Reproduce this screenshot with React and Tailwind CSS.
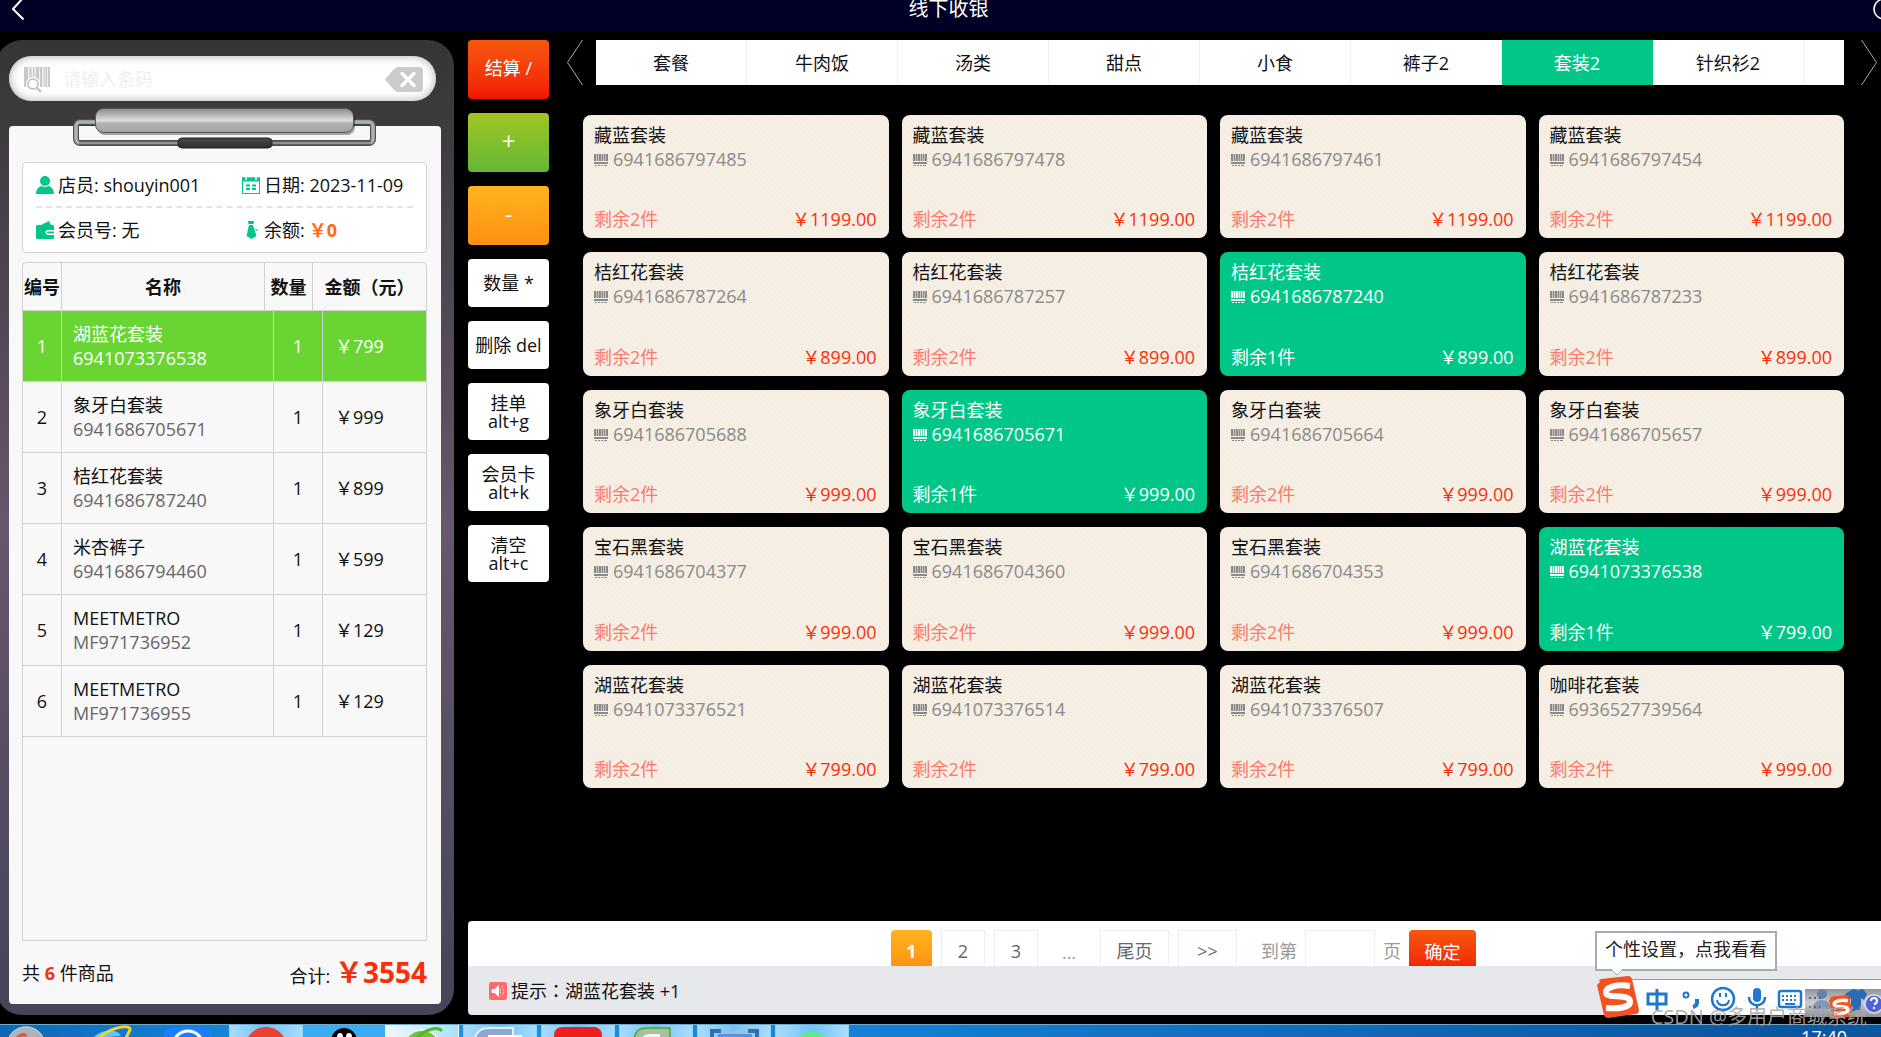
import { useState } from "react";

const categories = ["套餐", "牛肉饭", "汤类", "甜点", "小食", "裤子2", "套装2", "针织衫2"];

const cartItems = [
  { id: 1, name: "湖蓝花套装", code: "6941073376538", qty: 1, price: 799 },
  { id: 2, name: "象牙白套装", code: "6941686705671", qty: 1, price: 999 },
  { id: 3, name: "桔红花套装", code: "6941686787240", qty: 1, price: 899 },
  { id: 4, name: "米杏裤子", code: "6941686794460", qty: 1, price: 599 },
  { id: 5, name: "MEETMETRO", code: "MF971736952", qty: 1, price: 129 },
  { id: 6, name: "MEETMETRO", code: "MF971736955", qty: 1, price: 129 },
];

const products = [
  { name: "藏蓝套装", code: "6941686797485", stock: 2, price: "1199.00" },
  { name: "藏蓝套装", code: "6941686797478", stock: 2, price: "1199.00" },
  { name: "藏蓝套装", code: "6941686797461", stock: 2, price: "1199.00" },
  { name: "藏蓝套装", code: "6941686797454", stock: 2, price: "1199.00" },
  { name: "桔红花套装", code: "6941686787264", stock: 2, price: "899.00" },
  { name: "桔红花套装", code: "6941686787257", stock: 2, price: "899.00" },
  { name: "桔红花套装", code: "6941686787240", stock: 1, price: "899.00" },
  { name: "桔红花套装", code: "6941686787233", stock: 2, price: "899.00" },
  { name: "象牙白套装", code: "6941686705688", stock: 2, price: "999.00" },
  { name: "象牙白套装", code: "6941686705671", stock: 1, price: "999.00" },
  { name: "象牙白套装", code: "6941686705664", stock: 2, price: "999.00" },
  { name: "象牙白套装", code: "6941686705657", stock: 2, price: "999.00" },
  { name: "宝石黑套装", code: "6941686704377", stock: 2, price: "999.00" },
  { name: "宝石黑套装", code: "6941686704360", stock: 2, price: "999.00" },
  { name: "宝石黑套装", code: "6941686704353", stock: 2, price: "999.00" },
  { name: "湖蓝花套装", code: "6941073376538", stock: 1, price: "799.00" },
  { name: "湖蓝花套装", code: "6941073376521", stock: 2, price: "799.00" },
  { name: "湖蓝花套装", code: "6941073376514", stock: 2, price: "799.00" },
  { name: "湖蓝花套装", code: "6941073376507", stock: 2, price: "799.00" },
  { name: "咖啡花套装", code: "6936527739564", stock: 2, price: "999.00" },
];

const actions = [
  { lines: ["结算 /"], style: "h-[59px] pb-1 text-white bg-linear-to-b from-[#f8560e] to-[#f01306]" },
  { lines: ["+"], style: "h-[59px] pb-1 text-2xl text-white bg-linear-to-b from-[#a0c621] to-[#62b735]" },
  { lines: ["-"], style: "h-[59px] pb-1 text-2xl text-white bg-linear-to-b from-[#ffb41e] to-[#ff8f12]" },
  { lines: ["数量 *"], style: "h-12 bg-white" },
  { lines: ["删除 del"], style: "h-12 bg-white" },
  { lines: ["挂单", "alt+g"], style: "h-[57px] bg-white" },
  { lines: ["会员卡", "alt+k"], style: "h-[57px] bg-white" },
  { lines: ["清空", "alt+c"], style: "h-[57px] bg-white" },
];

function Header() {
  return (
    <header className="flex h-[31px] shrink-0 items-start bg-[#000026] pl-3 text-white">
      <button aria-label="返回" className="h-5 w-3">
        <svg width="12" height="20" viewBox="0 0 12 20" fill="none" stroke="currentColor" strokeWidth="2">
          <path d="M11 -2L1 9L11.500 19.500" />
        </svg>
      </button>
      <h1 className="flex-1 text-center text-xl leading-[18px]">线下收银</h1>
      <button aria-label="刷新" className="h-5 w-2 overflow-hidden">
        <svg width="8" height="20" viewBox="0 0 8 20" fill="none" stroke="currentColor" strokeWidth="1.500">
          <circle cx="11" cy="9" r="10" />
        </svg>
      </button>
    </header>
  );
}

function BarcodeScanIcon() {
  return (
    <svg width="28" height="28" viewBox="0 0 28 28" fill="#c9c9c9">
      <path d="M0 0h4v20h-4zM5.500 0h2v20h-2zM9 0h1.500v20h-1.500zM12 0h3v20h-3zM16 0h2v20h-2zM19.500 0h1v20h-1zM21.500 0h1.500v20h-1.500zM24 0h2v20h-2z" />
      <path d="M0 0h26v20h-26z" opacity="0.300" />
      <circle cx="9" cy="17" r="5" fill="#fff" stroke="#fff" strokeWidth="4" />
      <circle cx="9" cy="17" r="5" fill="#fff" stroke="#c9c9c9" strokeWidth="2" />
      <path d="M12.500 20.500l4.500 4.500" stroke="#c9c9c9" strokeWidth="2.500" />
    </svg>
  );
}

function BarcodeIcon() {
  return (
    <svg width="14" height="12" viewBox="0 0 14 12" fill="currentColor" className="mt-0.5">
      <path d="M0 0h14v7h-14z" opacity="0.450" />
      <path d="M0 0h2v7h-2zM3 0h1v7h-1zM5 0h2v7h-2zM8 0h1v7h-1zM10 0h1v7h-1zM12 0h2v7h-2zM0 8h14v2h-14zM1 11h2v1h-2zM4 11h2v1h-2zM7 11h2v1h-2zM10 11h3v1h-3z" />
    </svg>
  );
}

function ClipIcon() {
  return (
    <svg width="304" height="42" viewBox="0 0 304 42" className="absolute -top-[18px] left-16">
      <defs>
        <linearGradient id="clipBar" x1="0" y1="0" x2="0" y2="1">
          <stop offset="0" stopColor="#8c8c8c" />
          <stop offset="0.200" stopColor="#a9a9a9" />
          <stop offset="0.500" stopColor="#dedede" />
          <stop offset="0.620" stopColor="#b4b4b4" />
          <stop offset="1" stopColor="#a0a0a0" />
        </linearGradient>
        <linearGradient id="clipGrip" x1="0" y1="0" x2="0" y2="1">
          <stop offset="0" stopColor="#4a4a4a" />
          <stop offset="1" stopColor="#2c2c2c" />
        </linearGradient>
      </defs>
      <rect x="3" y="14" width="297" height="21" rx="4" fill="none" stroke="#4d4f4f" strokeWidth="6" />
      <rect x="3" y="14" width="297" height="21" rx="4" fill="none" stroke="#9c9e9e" strokeWidth="4" />
      <rect x="3" y="14" width="297" height="21" rx="4" fill="none" stroke="#c4c6c6" strokeWidth="1" />
      <path d="M6 35H298" stroke="#5c5e5e" strokeWidth="4" />
      <path d="M6 35H298" stroke="#a4a6a6" strokeWidth="1.500" />
      <rect x="24" y="2" width="258" height="25" rx="8" fill="#000" opacity="0.350" />
      <rect x="22.500" y="0.500" width="258" height="24" rx="8" fill="url(#clipBar)" stroke="#555" />
      <rect x="105" y="30" width="94" height="10" rx="4" fill="url(#clipGrip)" stroke="#222" />
    </svg>
  );
}

function CashierInfo() {
  return (
    <section className="rounded border border-[#d2d2d2] bg-white px-[13px]">
      <div className="flex h-[45px] items-center border-b-2 border-dashed border-[#e4e4e4]">
        <p className="flex w-[206px] items-center gap-1">
          <svg width="18" height="18" viewBox="0 0 18 18" fill="#00c688">
            <circle cx="9" cy="5" r="5" />
            <path d="M0 18c0-5 3-7.500 6-8 1.500 1.300 4.500 1.300 6 0 3 .5 6 3 6 8z" />
          </svg>
          店员: shouyin001
        </p>
        <p className="flex items-center gap-1">
          <svg width="18" height="18" viewBox="0 0 18 18" fill="none" stroke="#00c688">
            <rect x="0.500" y="2" width="17" height="15.500" />
            <path d="M0 3.500h18" strokeWidth="4" />
            <path d="M4 0v4M14 0v4" stroke="#fff" strokeWidth="1.500" />
            <path d="M4 9.500h4M10 9.500h4M4 13h4M10 13h4" strokeWidth="2" />
          </svg>
          日期: 2023-11-09
        </p>
      </div>
      <div className="flex h-11 items-center">
        <p className="flex w-[206px] items-center gap-1">
          <svg width="18" height="18" viewBox="0 0 18 18" fill="#00c688">
            <path d="M5 4l8-4 2 4zM0 5.500a1.500 1.500 0 0 1 1.500-1.500h15a1.500 1.500 0 0 1 1.500 1.500v11a1.500 1.500 0 0 1-1.500 1.500h-15a1.500 1.500 0 0 1-1.500-1.500z" />
            <path d="M18 9h-6a2.500 2.500 0 0 0 0 5h6v-1.500h-6a1 1 0 0 1 0-2h6z" fill="#fff" />
          </svg>
          会员号: 无
        </p>
        <p className="flex items-center gap-1">
          <svg width="18" height="18" viewBox="0 0 18 18" fill="#00c688">
            <path d="M6 0h6l-.5 3h-5zM7 4h4l.5 2 3 9-5 3-5-3 2-9zM12 7l4 2-1 1z" />
          </svg>
          余额: <strong className="text-[#ff6a13]">￥0</strong>
        </p>
      </div>
    </section>
  );
}

function CartTable({ selected, onSelect }) {
  return (
    <div className="mt-[9px] flex-1 rounded-t border border-[#d2d2d2]">
      <table className="w-full table-fixed border-separate border-spacing-0">
        <colgroup>
          <col className="w-[39px]" />
          <col className="w-[203px]" />
          <col className="w-[9px]" />
          <col className="w-[39px]" />
          <col className="w-[10px]" />
          <col />
        </colgroup>
        <thead>
          <tr className="h-12">
            <th className="border-r border-b border-[#d2d2d2] whitespace-nowrap">编号</th>
            <th className="border-r border-b border-[#d2d2d2]">名称</th>
            <th colSpan={2} className="border-r border-b border-[#d2d2d2]">数量</th>
            <th colSpan={2} className="border-b border-[#d2d2d2] whitespace-nowrap">金额（元）</th>
          </tr>
        </thead>
        <tbody>
          {cartItems.map((item) => (
            <tr
              key={item.id}
              onClick={() => onSelect(item.id)}
              className={`h-[71px] cursor-pointer ${item.id === selected ? "bg-[#69d533] text-white" : ""}`}
            >
              <td className="border-r border-b border-[#d2d2d2] text-center">{item.id}</td>
              <td colSpan={2} className="border-r border-b border-[#d2d2d2] pl-[11px]">
                {item.name}
                <br />
                <span className={item.id === selected ? "text-white" : "text-[#666]"}>{item.code}</span>
              </td>
              <td colSpan={2} className="border-r border-b border-[#d2d2d2] text-center">{item.qty}</td>
              <td className="border-b border-[#d2d2d2] pl-3">￥{item.price}</td>
            </tr>
          ))}
        </tbody>
      </table>
    </div>
  );
}

function CartPanel() {
  const [selected, setSelected] = useState(1);
  const [barcode, setBarcode] = useState("");
  const total = cartItems.reduce((sum, item) => sum + item.price * item.qty, 0);

  return (
    <aside className="-ml-1 flex w-[458px] shrink-0 flex-col rounded-[26px] bg-linear-to-b from-[#353535] via-[#68576e] to-[#454459] px-[13px] pt-4 pb-[11px]">
      <div className="mr-[5px] flex h-[45px] items-center rounded-full bg-white pr-[13px] pl-[15px] inset-shadow-[0_0_10px_#aaa]">
        <label htmlFor="barcode" aria-label="条码" className="pt-1">
          <BarcodeScanIcon />
        </label>
        <input
          id="barcode"
          value={barcode}
          onChange={(e) => setBarcode(e.target.value)}
          placeholder="请输入条码"
          className="ml-[11px] min-w-0 flex-1 outline-none placeholder:text-[#efefef]"
        />
        <button aria-label="清除" onClick={() => setBarcode("")} className="pt-0.5">
          <svg width="38" height="26" viewBox="0 0 38 26">
            <path d="M12 0h22a4 4 0 0 1 4 4v17a4 4 0 0 1-4 4h-22l-3-2-9-10.500 9-10.500z" fill="#cbcbcb" />
            <path d="M17 6.500l12 12M29 6.500l-12 12" stroke="#fff" strokeWidth="3.500" strokeLinecap="round" />
          </svg>
        </button>
      </div>

      <div className="relative mt-[25px] flex flex-1 flex-col rounded bg-[#f8f8f8] pt-9 pr-[14px] pl-[13px]">
        <ClipIcon />
        <CashierInfo />
        <CartTable selected={selected} onSelect={setSelected} />
        <div className="flex h-[63px] items-center justify-between">
          <p>
            共 <strong className="text-[#f6300c]">{cartItems.length}</strong> 件商品
          </p>
          <p className="pt-0.5">
            合计: <strong className="text-[28px] text-[#f6300c]">￥{total}</strong>
          </p>
        </div>
      </div>
    </aside>
  );
}

function ActionButtons() {
  return (
    <div className="flex w-[81px] shrink-0 flex-col gap-[14px]">
      {actions.map((action) => (
        <button
          key={action.lines[0]}
          className={`flex flex-col items-center justify-center rounded leading-[18px] whitespace-nowrap ${action.style}`}
        >
          {action.lines.map((line) => (
            <span key={line}>{line}</span>
          ))}
        </button>
      ))}
    </div>
  );
}

function CategoryTabs() {
  const [active, setActive] = useState("套装2");

  return (
    <nav className="flex items-center pr-1">
      <button aria-label="上一组">
        <svg width="16" height="45" viewBox="0 0 16 45" fill="none" stroke="#aaa">
          <path d="M15.500 0L0.500 22.500L15.500 45" />
        </svg>
      </button>
      <div className="mr-[17px] ml-[13px] flex h-[45px] min-w-0 flex-1 overflow-hidden bg-white">
        {categories.map((name) => (
          <button
            key={name}
            onClick={() => setActive(name)}
            className={`w-[151px] shrink-0 border-r ${
              name === active ? "border-[#00c688] bg-[#00c688] text-white" : "border-[#f0f0f0]"
            }`}
          >
            {name}
          </button>
        ))}
      </div>
      <button aria-label="下一组">
        <svg width="16" height="45" viewBox="0 0 16 45" fill="none" stroke="#aaa">
          <path d="M0.500 0L15.500 22.500L0.500 45" />
        </svg>
      </button>
    </nav>
  );
}

function ProductCard({ product }) {
  const picked = product.stock === 1;

  return (
    <button
      className={`flex flex-col justify-between rounded-lg pt-2 pr-3 pb-[7px] pl-[11px] text-left ${
        picked
          ? "bg-[#00c688] text-white"
          : "bg-[repeating-linear-gradient(45deg,#f4f0e6_0px,#f4f0e6_2px,#f9e9dc_3px,#f4f0e6_4px)]"
      }`}
    >
      <span className="block">
        <span className="block">{product.name}</span>
        <span className={`flex items-center gap-[5px] ${picked ? "" : "text-[#8a8a8a]"}`}>
          <BarcodeIcon />
          {product.code}
        </span>
      </span>
      <span className="flex w-full justify-between">
        <span className={picked ? "" : "text-[#fa7b6e]"}>剩余{product.stock}件</span>
        <span className={picked ? "" : "text-[#f6300c]"}>￥{product.price}</span>
      </span>
    </button>
  );
}

function Pagination() {
  return (
    <div className="flex h-[45px] items-start justify-center overflow-hidden rounded-tl bg-white pt-[9px] pl-[18px] text-[#666]">
      <button className="h-[42px] w-[41px] shrink-0 rounded bg-linear-to-b from-[#ffb41e] to-[#ff8f12] font-bold text-white">1</button>
      <button className="ml-[9px] h-[42px] w-11 border border-[#eee]">2</button>
      <button className="ml-[9px] h-[42px] w-11 border border-[#eee]">3</button>
      <span className="ml-6 leading-[44px] text-[#999]">...</span>
      <button className="ml-6 h-[42px] w-[69px] border border-[#eee]">尾页</button>
      <button className="ml-[9px] h-[42px] w-[59px] border border-[#eee]">&gt;&gt;</button>
      <label htmlFor="page" className="ml-6 leading-[42px] text-[#999]">到第</label>
      <input id="page" className="ml-2 h-[42px] w-[70px] border border-[#eee] text-center outline-none" />
      <span className="ml-2 leading-[42px] text-[#999]">页</span>
      <button className="ml-2 h-11 w-[67px] rounded bg-linear-to-b from-[#f8560e] to-[#f01306] text-white">确定</button>
    </div>
  );
}

function TipBar() {
  return (
    <div className="flex h-[49px] items-center gap-1 rounded-bl bg-[#e7e8ec] pl-[21px]">
      <svg width="18" height="18" viewBox="0 0 18 18">
        <rect width="18" height="18" rx="2" fill="#ff6b6b" />
        <path d="M2.500 7h3l4.500-4v12l-4.500-4h-3z" fill="#fff" />
        <path d="M11.500 6.500v5M13 4.500c2.500 2 2.500 7 0 9" stroke="#ffd0d0" fill="none" strokeDasharray="2 1" />
      </svg>
      <p>
        提示<span className="font-['Noto_Sans_CJK_TC',sans-serif]">：</span>湖蓝花套装 +1
      </p>
    </div>
  );
}

function SogouLogo({ size }) {
  return (
    <svg width={size} height={size} viewBox="0 0 42 42">
      <path d="M3 6Q1 4 4 3L31 0Q34 0 35 3L42 34Q42 37 39 38L11 42Q8 42 7 39L0 9Z" fill="#f4511e" />
      <path
        d="M33 10C20 8 8 11 9 17C10 23 32 17 33 25C34 32 20 33 9 32"
        fill="none"
        stroke="#fff"
        strokeWidth="6"
      />
    </svg>
  );
}

function InputMethodBar() {
  return (
    <>
      {/* bubble above the toolbar */}
      <div className="absolute right-[104px] bottom-[66px] border-2 border-[#a6adb1] bg-white px-2 pt-0.5 pb-1.5 leading-7 text-[#222]">
        个性设置，点我看看
        <svg width="12" height="8" viewBox="0 0 12 8" className="absolute -bottom-2 left-[14px]">
          <path d="M0 0L6 6L12 0" fill="#fff" stroke="#a6adb1" />
        </svg>
      </div>

      <div className="absolute right-0 bottom-[22px] flex h-9 w-[256px] items-center border-t border-[#999] bg-white pt-0.5 pl-[19px]">
        <div className="absolute -top-1 -left-7">
          <SogouLogo size="42" />
        </div>
        <svg width="160" height="26" viewBox="0 0 160 26" fill="none" stroke="#1f78cd" strokeWidth="3">
          <path d="M4 8h18v10h-18zM13 3v21" />
          <circle cx="42" cy="9" r="2.500" strokeWidth="2" />
          <path d="M53 13v3q0 4-4 5" strokeWidth="4" />
          <circle cx="79" cy="13" r="11" strokeWidth="2.500" />
          <path d="M73 14c1 7 11 7 12 0M76 7v4M82 7v4" strokeWidth="2" />
          <rect x="109" y="2" width="8" height="14" rx="4" fill="#1f78cd" stroke="none" />
          <path d="M105 11c0 11 16 11 16 0M113 19v5" strokeWidth="2.500" />
          <rect x="135" y="5" width="22" height="16" rx="2" strokeWidth="2.500" />
          <path d="M138 10h16M138 14h16" strokeWidth="2" strokeDasharray="2 2" />
          <path d="M141 18h10" strokeWidth="2" />
        </svg>
      </div>

      {/* faded tray strip on top of the toolbar */}
      <div className="absolute right-0 bottom-5 h-7 w-[76px] bg-linear-to-b from-[#777b82]/80 via-[#c4c6ca]/90 to-[#8d9096]">
        <svg width="76" height="28" viewBox="0 0 76 28">
          <circle cx="17" cy="5" r="5" fill="#6482b0" />
          <path d="M8 20c0-12 18-12 18 0z" fill="#8297b8" />
          <path d="M4 9h2M9 9h2M14 9h2M4 18h2M9 18h2M14 18h2" stroke="#666" strokeWidth="2" />
          <path d="M40 5l8-5h2q3 3 6 0h2l4 5-3 6-3-2v13h-10v-13l-3 2z" fill="#2a6cb4" />
          <circle cx="69" cy="15" r="9" fill="#4f62d8" stroke="#d7dcf8" strokeWidth="1.500" />
          <path d="M66 12q0-3 3-3t3 3q0 2-3 3.500M69 18v2" stroke="#fff" strokeWidth="2" fill="none" />
        </svg>
        <div className="absolute top-1.5 left-6">
          <SogouLogo size="24" />
        </div>
      </div>
    </>
  );
}

function TaskItem({ style, children }) {
  return (
    <button aria-label="任务" className={`flex h-full shrink-0 items-start justify-center overflow-hidden ${style}`}>
      <svg width="60" height="13" viewBox="0 0 60 13">
        {children}
      </svg>
    </button>
  );
}

const openTask = "w-[74px] border-x border-[#8fd4fb] bg-linear-to-r from-[#a9dcfb] via-[#6cc5fa] to-[#a9dcfb]";

function Taskbar() {
  return (
    <footer className="flex h-[13px] shrink-0 overflow-hidden border-t border-[#6fa9cd] bg-linear-to-r from-[#0f68b4] via-[#1b97f4] via-20% to-[#0d56a0] to-95%">
      <TaskItem style="w-[52px]">
        <circle cx="30" cy="23" r="22" fill="#a9b4bd" stroke="#dde6ec" />
        <path d="M18 13q10-9 14-1z" fill="#e4532a" />
      </TaskItem>
      <TaskItem style="ml-[35px] w-[60px]">
        <path d="M6 13c8-9 24-10 28-2z" fill="#5fc8f5" />
        <path d="M12 13C22 3 44-2 43 5L39 13" fill="none" stroke="#f4cf2e" strokeWidth="3" />
      </TaskItem>
      <TaskItem style="ml-[11px] w-[60px]">
        <rect x="6" y="2" width="48" height="30" rx="9" fill="#1c7dff" />
        <circle cx="30" cy="21" r="15" fill="none" stroke="#fff" strokeWidth="3" />
      </TaskItem>
      <TaskItem style={`ml-[11px] ${openTask}`}>
        <circle cx="30" cy="23" r="21" fill="#e94235" />
      </TaskItem>
      <TaskItem style="w-[82px] bg-[#3aacf4]">
        <circle cx="30" cy="16" r="13" fill="#000" />
        <ellipse cx="26" cy="12" rx="3" ry="4" fill="#fff" />
        <ellipse cx="35" cy="12" rx="3" ry="4" fill="#fff" />
      </TaskItem>
      <TaskItem style="w-[74px] border-x border-white bg-linear-to-r from-[#eef9ff] to-[#a8e0fb]">
        <circle cx="30" cy="24" r="19" fill="#69c63c" stroke="#eee" strokeWidth="2" />
        <path d="M24 13C34 4 46 1 50 6" fill="none" stroke="#55b82e" strokeWidth="3" />
      </TaskItem>
      <TaskItem style={`ml-1 ${openTask}`}>
        <path d="M5 13Q8 3 18 3H43V13" fill="#8fa6cf" stroke="#e9effa" strokeWidth="2" />
        <path d="M18 10h34v3h-34z" fill="#fff" />
      </TaskItem>
      <TaskItem style={`ml-1 ${openTask}`}>
        <rect x="6" y="2" width="48" height="30" rx="8" fill="#ef1f1f" />
      </TaskItem>
      <TaskItem style={`ml-1 ${openTask}`}>
        <path d="M8 13Q10 3 20 3H44V13" fill="#a8bfa0" stroke="#4da52e" strokeWidth="1.500" />
        <path d="M16 13Q18 9 24 9H34V13" fill="#f4f7f2" />
      </TaskItem>
      <TaskItem style={`ml-1 ${openTask}`}>
        <path d="M8 13V6h9M53 13V6h-9" fill="none" stroke="#2f6fb0" strokeWidth="4" />
        <path d="M14 9h34v4h-34z" fill="#4a95f0" />
        <path d="M18 7h25" stroke="#b9b9b9" strokeWidth="2" />
      </TaskItem>
      <TaskItem style={`ml-1 ${openTask}`}>
        <circle cx="30" cy="24" r="17" fill="#5bee79" />
      </TaskItem>
      <span className="mr-[34px] ml-auto pt-0.5 leading-5 text-white">17:40</span>
    </footer>
  );
}

export default function App() {
  return (
    <div className="relative flex h-screen flex-col overflow-hidden bg-black font-['Open_Sans','Noto_Sans_CJK_SC',sans-serif] text-lg leading-6 text-[#111]">
      <Header />
      <main className="flex flex-1 gap-[14px] py-[9px]">
        <CartPanel />
        <div className="flex min-w-0 flex-1 flex-col">
          <div className="flex gap-[18px]">
            <ActionButtons />
            <section className="min-w-0 flex-1">
              <CategoryTabs />
              <div className="mt-[30px] mr-[37px] ml-4 grid min-h-[673px] auto-rows-fr grid-cols-4 gap-x-[13px] gap-y-[14px]">
                {products.map((product) => (
                  <ProductCard key={product.code} product={product} />
                ))}
              </div>
            </section>
          </div>
          <div className="mt-auto">
            <Pagination />
            <TipBar />
          </div>
        </div>
      </main>
      <Taskbar />
      <InputMethodBar />
      <p className="absolute right-3.5 bottom-1.5 text-xl text-[#a8a8a8]/90">CSDN @多用户商城系统</p>
    </div>
  );
}
